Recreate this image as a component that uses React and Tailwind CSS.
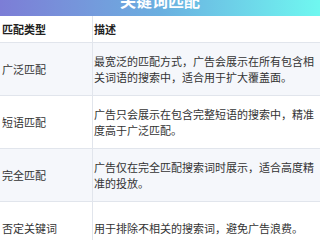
const rows = [
  { type: '广泛匹配', desc: '最宽泛的匹配方式，广告会展示在所有包含相关词语的搜索中，适合用于扩大覆盖面。' },
  { type: '短语匹配', desc: '广告只会展示在包含完整短语的搜索中，精准度高于广泛匹配。' },
  { type: '完全匹配', desc: '广告仅在完全匹配搜索词时展示，适合高度精准的投放。' },
  { type: '否定关键词', desc: '用于排除不相关的搜索词，避免广告浪费。' },
];

export default function App() {
  return (
    <div
      className="w-[320px] h-[240px] overflow-hidden bg-white text-[#333]"
      style={{ fontFamily: '"Noto Sans CJK SC", "Noto Sans", sans-serif' }}
    >
      <div className="-mt-[16px] h-[32px] flex items-center justify-center bg-gradient-to-r from-[#7c7dd6] via-[#6aafe0] to-[#6ff8f0] text-white text-[16px] font-bold">
        关键词匹配
      </div>

      <div className="flex h-[27px] items-center border-b border-[#e1e5ec] text-[11px] font-bold text-[#222]">
        <div className="w-[93px] h-full flex items-center pl-[2px] border-r border-[#e1e5ec]">匹配类型</div>
        <div className="flex-1 pl-[1px]">描述</div>
      </div>

      {rows.map((row, i) => (
        <div
          key={row.type}
          className={`flex h-[53px] border-b border-[#e1e5ec] text-[11px] leading-[16.5px] ${i % 2 === 0 ? 'bg-[#f5f7fb]' : 'bg-white'}`}
        >
          <div className="w-[93px] flex items-center pl-[2px] border-r border-[#e1e5ec]">{row.type}</div>
          <div className="flex-1 flex items-center pl-[1px] pr-[4px]">{row.desc}</div>
        </div>
      ))}
    </div>
  );
}
